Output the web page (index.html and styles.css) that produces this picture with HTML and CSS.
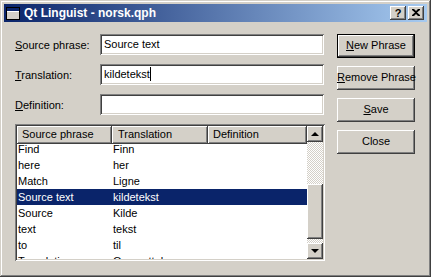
FILE: index.html
```html
<!DOCTYPE html>
<html>
<head>
<meta charset="utf-8">
<link rel="stylesheet" href="styles.css">
</head>
<body>
<div class="window">
  <div class="titlebar">
    <svg class="appicon" width="14" height="13" viewBox="0 0 14 13">
      <rect x="0.5" y="0.5" width="13" height="12" fill="#d4d0c8" stroke="#000"/>
      <rect x="1" y="1" width="12" height="3" fill="#0a246a"/>
      <line x1="1" y1="4.5" x2="13" y2="4.5" stroke="#fff"/>
    </svg>
    <span class="title">Qt Linguist - norsk.qph</span>
    <div class="tbuttons">
      <div class="tbtn">?</div>
      <div class="tbtn">
        <svg width="8" height="7" viewBox="0 0 8 7"><path d="M0 0h2l2 2 2-2h2v1L5 3.5 8 6v1H6L4 5 2 7H0V6l3-2.5L0 1z" fill="#000"/></svg>
      </div>
    </div>
  </div>
  <div class="content">
    <div class="leftcol">
      <div class="field">
        <label class="lbl"><u>S</u>ource phrase:</label>
        <div class="input">Source text</div>
      </div>
      <div class="field">
        <label class="lbl"><u>T</u>ranslation:</label>
        <div class="input">kildetekst<span class="caret"></span></div>
      </div>
      <div class="field">
        <label class="lbl"><u>D</u>efinition:</label>
        <div class="input"></div>
      </div>
      <div class="listbox">
        <div class="listmain">
          <div class="header">
            <div class="hcell c1">Source phrase</div>
            <div class="hcell c2">Translation</div>
            <div class="hcell c3">Definition</div>
          </div>
          <div class="viewport">
            <div class="rows">
              <div class="row"><span class="cell c1">Find</span><span class="cell c2">Finn</span></div>
              <div class="row"><span class="cell c1">here</span><span class="cell c2">her</span></div>
              <div class="row"><span class="cell c1">Match</span><span class="cell c2">Ligne</span></div>
              <div class="row selected"><span class="cell c1">Source text</span><span class="cell c2">kildetekst</span></div>
              <div class="row"><span class="cell c1">Source</span><span class="cell c2">Kilde</span></div>
              <div class="row"><span class="cell c1">text</span><span class="cell c2">tekst</span></div>
              <div class="row"><span class="cell c1">to</span><span class="cell c2">til</span></div>
              <div class="row"><span class="cell c1">Translations</span><span class="cell c2">Oversettelser</span></div>
            </div>
          </div>
        </div>
        <div class="scrollbar">
          <div class="sbtn"><span class="arrow up"></span></div>
          <div class="track t1"></div>
          <div class="thumb"></div>
          <div class="track t2"></div>
          <div class="sbtn"><span class="arrow down"></span></div>
        </div>
      </div>
    </div>
    <div class="rightcol">
      <div class="btn default"><u>N</u>ew Phrase</div>
      <div class="btn"><u>R</u>emove Phrase</div>
      <div class="btn"><u>S</u>ave</div>
      <div class="btn">Close</div>
    </div>
  </div>
</div>
</body>
</html>
```
FILE: styles.css
```css
html, body {
  margin: 0;
  padding: 0;
  background: #d4d0c8;
}
body {
  font-family: "Liberation Sans", Arial, sans-serif;
  font-size: 11px;
  color: #000;
}
.window {
  width: 431px;
  height: 277px;
  box-sizing: border-box;
  padding: 4px;
  background: #d4d0c8;
  box-shadow: inset -1px -1px #404040, inset 1px 1px #d4d0c8, inset -2px -2px #808080, inset 2px 2px #fff;
  display: flex;
  flex-direction: column;
}
.titlebar {
  height: 18px;
  flex: none;
  display: flex;
  align-items: center;
  background: linear-gradient(to right, #0a246a, #a6caf0);
  padding-left: 2px;
}
.appicon {
  display: block;
  margin-right: 4px;
}
.title {
  color: #fff;
  font-weight: bold;
  font-size: 12px;
  flex: 1;
  white-space: nowrap;
}
.tbuttons {
  display: flex;
  gap: 2px;
  margin-right: 3px;
}
.tbtn {
  width: 16px;
  height: 14px;
  box-sizing: border-box;
  background: #d4d0c8;
  box-shadow: inset -1px -1px #404040, inset 1px 1px #fff, inset -2px -2px #808080;
  display: flex;
  align-items: center;
  justify-content: center;
  font-weight: bold;
  font-size: 11px;
  line-height: 14px;
  padding-bottom: 1px;
}
.content {
  display: flex;
  padding: 12px 0 0 11px;
  gap: 12px;
}
.leftcol {
  width: 310px;
  display: flex;
  flex-direction: column;
  gap: 9px;
}
.field {
  display: flex;
  align-items: center;
  height: 21px;
}
.lbl {
  width: 85px;
  flex: none;
}
.input {
  width: 224px;
  height: 21px;
  box-sizing: border-box;
  background: #fff;
  box-shadow: inset 1px 1px #808080, inset -1px -1px #fff, inset 2px 2px #404040, inset -2px -2px #d4d0c8;
  padding: 0 4px;
  line-height: 21px;
  white-space: nowrap;
}
.caret {
  display: inline-block;
  width: 1px;
  height: 14px;
  background: #000;
  vertical-align: -3px;
}
.listbox {
  height: 137px;
  box-sizing: border-box;
  padding: 2px;
  background: #fff;
  box-shadow: inset 1px 1px #808080, inset -1px -1px #fff, inset 2px 2px #404040, inset -2px -2px #d4d0c8;
  display: flex;
}
.listmain {
  width: 290px;
  display: flex;
  flex-direction: column;
}
.header {
  display: flex;
  height: 18px;
  flex: none;
  position: relative;
  z-index: 1;
}
.hcell {
  box-sizing: border-box;
  height: 18px;
  line-height: 17px;
  background: #d4d0c8;
  box-shadow: inset -1px -1px #404040, inset 1px 1px #fff, inset -2px -2px #808080;
  padding-left: 5px;
  white-space: nowrap;
  overflow: hidden;
}
.hcell.c1 { width: 95px; }
.hcell.c2 { width: 96px; padding-left: 6px; }
.hcell.c3 { width: 99px; }
.viewport {
  flex: 1;
  overflow: hidden;
}
.rows {
  margin-top: -3px;
}
.row {
  display: flex;
  height: 16px;
  line-height: 16px;
  white-space: nowrap;
}
.row.selected {
  background: #0a246a;
  color: #fff;
}
.cell {
  box-sizing: border-box;
  padding-left: 1px;
}
.cell.c1 { width: 95px; }
.cell.c2 { width: 96px; }
.scrollbar {
  width: 16px;
  display: flex;
  flex-direction: column;
}
.sbtn {
  height: 16px;
  flex: none;
  background: #d4d0c8;
  box-shadow: inset -1px -1px #404040, inset 1px 1px #fff, inset -2px -2px #808080;
  display: flex;
  align-items: center;
  justify-content: center;
}
.arrow {
  width: 0;
  height: 0;
  border-left: 4px solid transparent;
  border-right: 4px solid transparent;
}
.arrow.up {
  border-bottom: 4px solid #000;
  margin-top: -1px;
}
.arrow.down {
  border-top: 4px solid #000;
}
.track {
  background: repeating-conic-gradient(#d4d0c8 0 25%, #fff 0 50%) 0 0 / 2px 2px;
}
.track.t1 { height: 42px; }
.track.t2 { height: 4px; }
.thumb {
  height: 55px;
  background: #d4d0c8;
  box-shadow: inset -1px -1px #404040, inset 1px 1px #fff, inset -2px -2px #808080;
}
.rightcol {
  width: 78px;
  display: flex;
  flex-direction: column;
  gap: 8px;
}
.btn {
  height: 24px;
  box-sizing: border-box;
  background: #d4d0c8;
  box-shadow: inset -1px -1px #404040, inset 1px 1px #fff, inset -2px -2px #808080;
  text-align: center;
  line-height: 23px;
  white-space: nowrap;
}
.btn.default {
  box-shadow: inset 0 0 0 1px #000, inset -2px -2px #404040, inset 2px 2px #fff, inset -3px -3px #808080;
}
```
